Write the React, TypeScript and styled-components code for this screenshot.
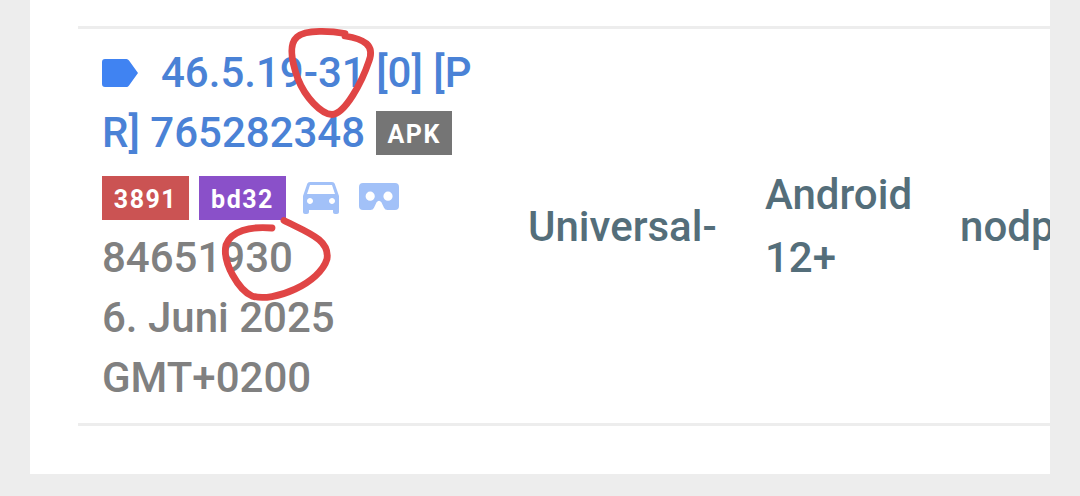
import styled, { createGlobalStyle } from 'styled-components';

const GlobalStyle = createGlobalStyle`
  html,
  body {
    margin: 0;
    background: #ededed;
    overflow: hidden;
  }
`;

export default function App() {
  return (
    <Page>
      <GlobalStyle />
      <Card>
        <VariantRow>
          <VersionCell>
            <Line>
              <TagIcon viewBox="0 0 36 28">
                <path
                  d="M3 0H24.5Q26 0 27 1.5L36 14L27 26.5Q26 28 24.5 28H3Q0 28 0 25V3Q0 0 3 0Z"
                  fill="#4083f2"
                />
              </TagIcon>
              <VersionLink>46.5.19-31 [0] [P</VersionLink>
            </Line>
            <Line>
              <VersionLink>R] 765282348</VersionLink>
              <Badge $color="#757575" $width={76}>
                APK
              </Badge>
            </Line>
            <BadgeLine>
              <Badge $color="#cb5353" $width={87}>
                3891
              </Badge>
              <Badge $color="#8a50c9" $width={87}>
                bd32
              </Badge>
              <CarIcon viewBox="3 5 18 16">
                <path
                  d="M18.92 6.01C18.72 5.42 18.16 5 17.5 5h-11c-.66 0-1.21.42-1.42 1.01L3 12v8c0 .55.45 1 1 1h1c.55 0 1-.45 1-1v-1h12v1c0 .55.45 1 1 1h1c.55 0 1-.45 1-1v-8l-2.08-5.99zM6.5 16c-.83 0-1.5-.67-1.5-1.5S5.67 13 6.5 13s1.5.67 1.5 1.5S7.33 16 6.5 16zm11 0c-.83 0-1.5-.67-1.5-1.5s.67-1.5 1.5-1.5 1.5.67 1.5 1.5-.67 1.5-1.5 1.5zM5 11l1.5-4.5h11L19 11H5z"
                  fill="#a2c1f8"
                />
              </CarIcon>
              <HeadsetIcon viewBox="0 0 40 27">
                <path
                  fillRule="evenodd"
                  d="M4 0H36Q40 0 40 4V23Q40 27 36 27H28.5Q26 27 25 24.7L22.4 19.3Q20 16.2 17.6 19.3L15 24.7Q14 27 11.5 27H4Q0 27 0 23V4Q0 0 4 0ZM11.2 8.6a4.6 4.6 0 1 0 0 9.2a4.6 4.6 0 1 0 0-9.2ZM29 8.6a4.6 4.6 0 1 0 0 9.2a4.6 4.6 0 1 0 0-9.2Z"
                  fill="#a2c1f8"
                />
              </HeadsetIcon>
            </BadgeLine>
            <Line>84651930</Line>
            <Line>6. Juni 2025</Line>
            <Line>GMT+0200</Line>
          </VersionCell>
          <Cell>Universal-</Cell>
          <Cell>
            Android
            <br />
            12+
          </Cell>
          <Cell>nodpi</Cell>
        </VariantRow>
      </Card>
      <Markup viewBox="0 0 1080 496">
        <path d="M345 33.5C332 31 306 29 297 37C289 44 291 60 298 79C305 97 321 114 332 114.5C345 114 362 82 369 61C375 45 364 39 345 36" />
        <path d="M272 228C250 226 231 231 226 245C222 263 239 290 252 296C274 303 320 283 327 259C330 240 309 233 284 220.5" />
      </Markup>
    </Page>
  );
}

const Page = styled.main`
  position: relative;
  box-sizing: border-box;
  width: 1080px;
  height: 496px;
  padding: 0 30px 22px;
  background: #ededed;
  overflow: hidden;
  font-family: Roboto, sans-serif;
  font-size: 42px;
  font-weight: 500;
`;

const Card = styled.section`
  box-sizing: border-box;
  height: 474px;
  padding: 26px 0 0 48px;
  background: #fff;
  overflow: hidden;
`;

const VariantRow = styled.div`
  box-sizing: border-box;
  height: 400px;
  display: grid;
  grid-template-columns: 426px 237px 195px 200px;
  align-items: center;
  border-top: 3px solid #ededed;
  border-bottom: 3px solid #ededed;
`;

const VersionCell = styled.div`
  padding: 0 0 2px 24px;
  color: #808080;
`;

const Cell = styled.div`
  padding-left: 24px;
  color: #546e7a;
  line-height: 63px;
  white-space: nowrap;
`;

const Line = styled.div`
  display: flex;
  align-items: center;
  height: 60px;
  line-height: 60px;
  white-space: pre;
`;

const BadgeLine = styled(Line)`
  box-sizing: border-box;
  height: 65px;
  padding-top: 5px;
`;

const VersionLink = styled.span`
  color: #4a82d6;
`;

const Badge = styled.span<{ $color: string; $width: number }>`
  width: ${({ $width }) => $width}px;
  height: 44px;
  margin-right: 10px;
  background: ${({ $color }) => $color};
  color: #fff;
  font-size: 25px;
  font-weight: 700;
  line-height: 47px;
  letter-spacing: 1.5px;
  text-align: center;

  ${VersionLink} + & {
    margin-left: 11px;
  }
`;

const TagIcon = styled.svg`
  width: 36px;
  height: 28px;
  margin-right: 23px;
`;

const CarIcon = styled.svg`
  width: 36px;
  height: 32px;
  margin-left: 7px;
`;

const HeadsetIcon = styled.svg`
  width: 40px;
  height: 27px;
  margin: 0 0 3px 20px;
`;

/* pen strokes drawn over the table */
const Markup = styled.svg`
  position: absolute;
  inset: 0;
  width: 1080px;
  height: 496px;
  pointer-events: none;

  path {
    fill: none;
    stroke: #e04545;
    stroke-width: 6.8;
    stroke-linecap: round;
    stroke-linejoin: round;
  }
`;
